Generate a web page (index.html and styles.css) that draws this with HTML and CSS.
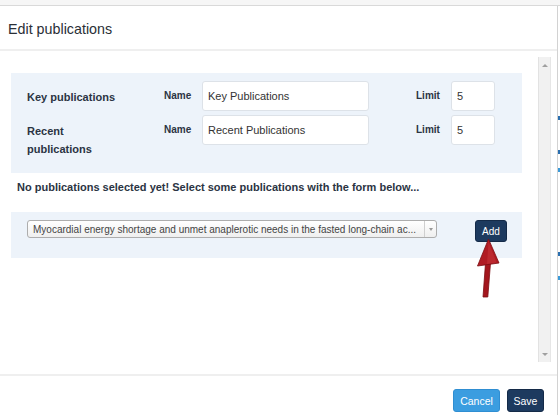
FILE: index.html
```html
<!DOCTYPE html>
<html>
<head>
<meta charset="utf-8">
<link rel="stylesheet" href="styles.css">
</head>
<body>
<div class="screen">
  <div class="topbar"></div>
  <div class="main">
    <div class="modal">
      <div class="modal-header"><h1 class="title">Edit publications</h1></div>
      <div class="modal-body">
        <div class="content">
          <div class="panel settings">
            <div class="row-label">Key publications</div>
            <div class="field-label">Name</div>
            <input class="input name-input" type="text" value="Key Publications">
            <div class="field-label limit-label">Limit</div>
            <input class="input limit-input" type="text" value="5">

            <div class="row-label">Recent publications</div>
            <div class="field-label">Name</div>
            <input class="input name-input" type="text" value="Recent Publications">
            <div class="field-label limit-label">Limit</div>
            <input class="input limit-input" type="text" value="5">
          </div>
          <p class="notice">No publications selected yet! Select some publications with the form below...</p>
          <div class="panel picker">
            <div class="select">
              <span class="select-text">Myocardial energy shortage and unmet anaplerotic needs in the fasted long-chain ac...</span>
              <span class="select-arrow"><span class="caret"></span></span>
            </div>
            <button class="btn btn-add">Add</button>
          </div>
          <svg class="arrow" width="28" height="64" viewBox="0 0 28 64">
            <polygon points="11.5,27 16.5,27 13.8,61 9,61" fill="#a3161d" stroke="#7c0d12" stroke-width="0.8"/>
            <polygon points="14.5,3 3.5,30 25,27" fill="#b01b23" stroke="#7c0d12" stroke-width="0.8"/>
            <polygon points="14.5,6 13,28 22.5,26.5" fill="#c7373c" opacity="0.5"/>
          </svg>
        </div>
        <div class="scrollbar">
          <span class="sb-up"></span>
          <span class="sb-down"></span>
        </div>
      </div>
      <div class="modal-footer">
        <button class="btn btn-cancel">Cancel</button>
        <button class="btn btn-save">Save</button>
      </div>
    </div>
    <div class="page-edge">
      <span class="edge-mark m1"></span>
      <span class="edge-mark m2"></span>
      <span class="edge-mark m3"></span>
      <span class="edge-mark m4"></span>
      <span class="edge-mark m5"></span>
    </div>
  </div>
</div>
</body>
</html>
```

FILE: styles.css
```css
* { box-sizing: border-box; }
html, body { margin: 0; padding: 0; }
body {
  font-family: "Liberation Sans", Arial, sans-serif;
  background: #ffffff;
  color: #333;
}
.screen {
  width: 560px;
  height: 415px;
  overflow: hidden;
  display: flex;
  flex-direction: column;
}
.topbar {
  height: 6px;
  flex: none;
  background: #f6f6f6;
  border-bottom: 1px solid #d9d9d9;
}
.main {
  flex: 1;
  display: flex;
  min-height: 0;
}
.modal {
  width: 557px;
  flex: none;
  display: flex;
  flex-direction: column;
  background: #fff;
}
.modal-header {
  height: 45px;
  flex: none;
  border-bottom: 2px solid #efefef;
  display: flex;
  align-items: center;
  padding-left: 8px;
}
.title {
  margin: 0;
  font-size: 14.3px;
  font-weight: normal;
  color: #2a2f36;
  padding-top: 2px;
}
.modal-body {
  height: 323px;
  flex: none;
  display: flex;
}
.content {
  flex: 1;
  position: relative;
  padding: 22px 0 0 11px;
}
.panel {
  width: 511px;
  background: #edf3fa;
}
.settings {
  display: grid;
  grid-template-columns: 137px 38px 167px 47px 35px 44px;
  row-gap: 4px;
  padding: 8px 0 15px 16px;
  align-items: start;
}
.row-label {
  font-size: 11px;
  font-weight: bold;
  line-height: 18px;
  padding-top: 7px;
  padding-right: 40px;
  color: #2b3443;
}
.field-label {
  font-size: 10px;
  font-weight: bold;
  line-height: 18px;
  padding-top: 6px;
  color: #2b3443;
}
.limit-label { grid-column: 5; }
.input {
  height: 30px;
  border: 1px solid #dde2e8;
  border-radius: 3px;
  background: #fff;
  font-family: "Liberation Sans", Arial, sans-serif;
  font-size: 11px;
  color: #333;
  padding: 0 5px;
  margin: 0;
  width: 100%;
}
.notice {
  margin: 5px 0 16px 6px;
  font-size: 11px;
  font-weight: bold;
  line-height: 18px;
  color: #2b3443;
}
.picker {
  display: flex;
  align-items: flex-start;
  padding: 8px 0 16px 16px;
}
.select {
  width: 410px;
  height: 18px;
  border: 1px solid #adadad;
  border-radius: 3px;
  background: linear-gradient(#ffffff, #efefef);
  display: flex;
  align-items: center;
}
.select-text {
  flex: 1;
  font-size: 10px;
  color: #444;
  padding-left: 5px;
  white-space: nowrap;
  overflow: hidden;
}
.select-arrow {
  width: 12px;
  height: 100%;
  border-left: 1px solid #cfcfcf;
  display: flex;
  align-items: center;
  justify-content: center;
}
.caret {
  width: 0;
  height: 0;
  border-left: 2.5px solid transparent;
  border-right: 2.5px solid transparent;
  border-top: 3px solid #999;
}
.btn {
  font-family: "Liberation Sans", Arial, sans-serif;
  color: #fff;
  border-radius: 3px;
  font-size: 10px;
  padding: 0;
  margin: 0;
  cursor: pointer;
}
.btn-add {
  margin-left: 38px;
  width: 32px;
  height: 22px;
  background: #1d3a5f;
  border: 1px solid #142a48;
}
.arrow {
  position: absolute;
  left: 474px;
  top: 185px;
}
.scrollbar {
  width: 13px;
  flex: none;
  margin: 6px 6px 12px 0;
  background: #f1f1f1;
  border-left: 1px solid #e2e2e2;
  border-right: 1px solid #e6e6e6;
  display: flex;
  flex-direction: column;
  justify-content: space-between;
  align-items: center;
  padding: 7px 0 6px;
}
.sb-up {
  width: 0; height: 0;
  border-left: 3px solid transparent;
  border-right: 3px solid transparent;
  border-bottom: 3px solid #a0a0a0;
}
.sb-down {
  width: 0; height: 0;
  border-left: 3px solid transparent;
  border-right: 3px solid transparent;
  border-top: 3px solid #a0a0a0;
}
.modal-footer {
  flex: 1;
  border-top: 2px solid #efefef;
  display: flex;
  justify-content: flex-end;
  align-items: flex-start;
  gap: 7px;
  padding: 13px 13px 0 0;
}
.btn-cancel {
  width: 47px;
  height: 23px;
  background: #3b9de0;
  border: 1px solid #2f8ed2;
  font-size: 10.5px;
}
.btn-save {
  width: 37px;
  height: 23px;
  background: #1d3a5f;
  border: 1px solid #142a48;
  font-size: 10.5px;
}
.page-edge {
  flex: 1;
  border-left: 1px solid #d2d2d2;
  background: #fff;
  display: flex;
  flex-direction: column;
  align-items: flex-end;
}
.edge-mark {
  width: 2px;
  height: 4px;
  background: #2a6fb0;
}
.m1 { margin-top: 110px; }
.m2 { margin-top: 30px; }
.m3 { margin-top: 14px; background: #3a9ad9; }
.m4 { margin-top: 80px; }
.m5 { margin-top: 20px; background: #3a9ad9; }
```
